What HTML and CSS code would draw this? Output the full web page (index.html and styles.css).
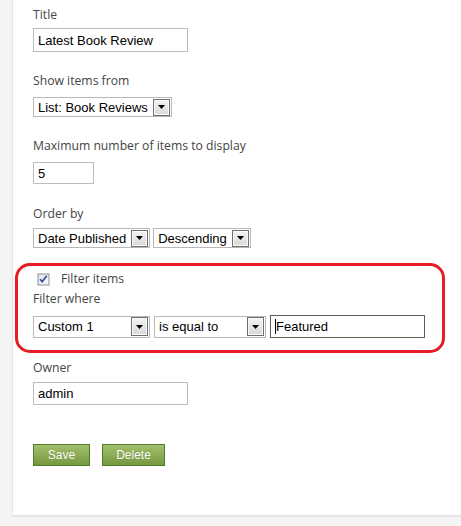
FILE: index.html
```html
<!DOCTYPE html>
<html>
<head>
<meta charset="utf-8">
<link rel="stylesheet" href="styles.css">
</head>
<body>
<div class="panel">
  <div class="field">
    <div class="label lb-5">Title</div>
    <div class="input w-title h24">Latest Book Review</div>
  </div>
  <div class="field mt21">
    <div class="label lb-8">Show items from</div>
    <div class="select h20"><span class="sel-text">List: Book Reviews</span><span class="arrow"><svg width="7" height="4" viewBox="0 0 7 4"><path d="M0 0H7L3.5 4Z" fill="#000"/></svg></span></div>
  </div>
  <div class="field mt21">
    <div class="label lb-8">Maximum number of items to display</div>
    <div class="input w-num h22">5</div>
  </div>
  <div class="field mt22">
    <div class="label lb-6">Order by</div>
    <div class="row">
      <div class="select h20"><span class="sel-text">Date Published</span><span class="arrow"><svg width="7" height="4" viewBox="0 0 7 4"><path d="M0 0H7L3.5 4Z" fill="#000"/></svg></span></div>
      <div class="select h20"><span class="sel-text">Descending</span><span class="arrow"><svg width="7" height="4" viewBox="0 0 7 4"><path d="M0 0H7L3.5 4Z" fill="#000"/></svg></span></div>
    </div>
  </div>
  <div class="filter mt23">
    <div class="ring"></div>
    <div class="check-row">
      <span class="checkbox"><svg width="13" height="13" viewBox="0 0 13 13"><defs><linearGradient id="cg" x1="0" y1="0" x2="1" y2="1"><stop offset="0" stop-color="#dfe5ee"/><stop offset="1" stop-color="#f6f8fb"/></linearGradient></defs><rect x="0.5" y="0.5" width="12" height="12" fill="#8e8f8f"/><rect x="1.5" y="1.5" width="10" height="10" fill="url(#cg)"/><path d="M3 6.2L5.2 8.6L9.8 2.8" fill="none" stroke="#3b4f9a" stroke-width="1.7"/></svg></span>
      <span class="check-label">Filter items</span>
    </div>
    <div class="label lb-8 mt4">Filter where</div>
    <div class="row center">
      <div class="select h22 w-custom"><span class="sel-text">Custom 1</span><span class="arrow tall"><svg width="7" height="4" viewBox="0 0 7 4"><path d="M0 0H7L3.5 4Z" fill="#000"/></svg></span></div>
      <div class="select h22 w-equal"><span class="sel-text">is equal to</span><span class="arrow tall"><svg width="7" height="4" viewBox="0 0 7 4"><path d="M0 0H7L3.5 4Z" fill="#000"/></svg></span></div>
      <div class="input focus w-feat h23"><span class="caret"></span>Featured</div>
    </div>
  </div>
  <div class="field mt22">
    <div class="label lb-6">Owner</div>
    <div class="input w-title h23">admin</div>
  </div>
  <div class="buttons">
    <button class="btn w-save">Save</button>
    <button class="btn w-del">Delete</button>
  </div>
</div>
</body>
</html>
```
FILE: styles.css
```css
* { box-sizing: border-box; }
html, body { margin: 0; padding: 0; }
body {
  background: #f4f4f4;
  width: 461px;
  height: 526px;
  overflow: hidden;
}
.panel {
  margin-left: 12px;
  height: 517px;
  background: #fff;
  border-left: 1px solid #e4e4e4;
  border-bottom: 2px solid #e6e6e6;
  padding: 7px 0 0 20px;
  display: flex;
  flex-direction: column;
  align-items: flex-start;
}
.field { display: flex; flex-direction: column; align-items: flex-start; }
.mt21 { margin-top: 21px; }
.mt22 { margin-top: 22px; }
.mt23 { margin-top: 23px; }
.mt4 { margin-top: 4px; }
.label {
  font-family: "Open Sans", "Noto Sans", sans-serif;
  font-size: 12.2px;
  line-height: 16px;
  color: #444;
}
.lb-5 { margin-bottom: 5px; }
.lb-6 { margin-bottom: 6px; }
.lb-8 { margin-bottom: 8px; }
.input {
  display: flex;
  align-items: center;
  border: 1px solid #bdbdbd;
  background: #fff;
  font-family: "Liberation Sans", Arial, sans-serif;
  font-size: 13px;
  color: #000;
  padding-left: 4px;
}
.input.focus { border-color: #5e5e4e; padding-left: 4px; }
.caret {
  display: inline-block;
  width: 1px;
  height: 15px;
  background: #000;
}
.w-title { width: 155px; }
.w-num { width: 61px; }
.w-feat { width: 155px; }
.h20 { height: 20px; }
.h22 { height: 22px; }
.h23 { height: 23px; }
.h24 { height: 24px; }
.row { display: flex; gap: 3px; align-items: flex-start; }
.row.center { align-items: center; gap: 4px; }
.select {
  display: inline-flex;
  align-items: center;
  border: 1px solid #b8b8b8;
  background: #fff;
  font-family: "Liberation Sans", Arial, sans-serif;
  font-size: 13px;
  color: #000;
  padding: 0 1px 0 4px;
}
.sel-text { flex: 1; white-space: nowrap; padding-right: 5px; }
.w-custom { width: 117px; }
.w-equal { width: 112px; }
.arrow {
  width: 17px;
  height: 17px;
  border: 1px solid #6f6f6f;
  box-shadow: inset 0 0 0 1px #fafafa;
  background: linear-gradient(#f2f2f2, #d9d9d9);
  display: flex;
  align-items: center;
  justify-content: center;
}
.arrow.tall { height: 19px; }
.filter {
  position: relative;
  display: flex;
  flex-direction: column;
  align-items: flex-start;
}
.ring {
  position: absolute;
  top: -8px;
  left: -18px;
  width: 430px;
  bottom: -15px;
  border: 3px solid #e51d27;
  border-radius: 15px;
  pointer-events: none;
}
.check-row {
  display: flex;
  align-items: center;
  height: 16px;
  padding-left: 4px;
}
.checkbox { display: flex; width: 13px; height: 13px; }
.check-label {
  margin-left: 11px;
  font-family: "Open Sans", "Noto Sans", sans-serif;
  font-size: 12.2px;
  line-height: 16px;
  color: #444;
}
.buttons {
  display: flex;
  gap: 12px;
  margin-top: 39px;
}
.btn {
  height: 22px;
  border: 1px solid #4f7b2a;
  background: linear-gradient(#a3c06c, #75983f);
  color: #fff;
  font-family: "Liberation Sans", Arial, sans-serif;
  font-size: 12px;
  padding: 0;
  text-shadow: 0 0 1px rgba(60,90,30,0.4);
}
.w-save { width: 57px; }
.w-del { width: 63px; }
```
